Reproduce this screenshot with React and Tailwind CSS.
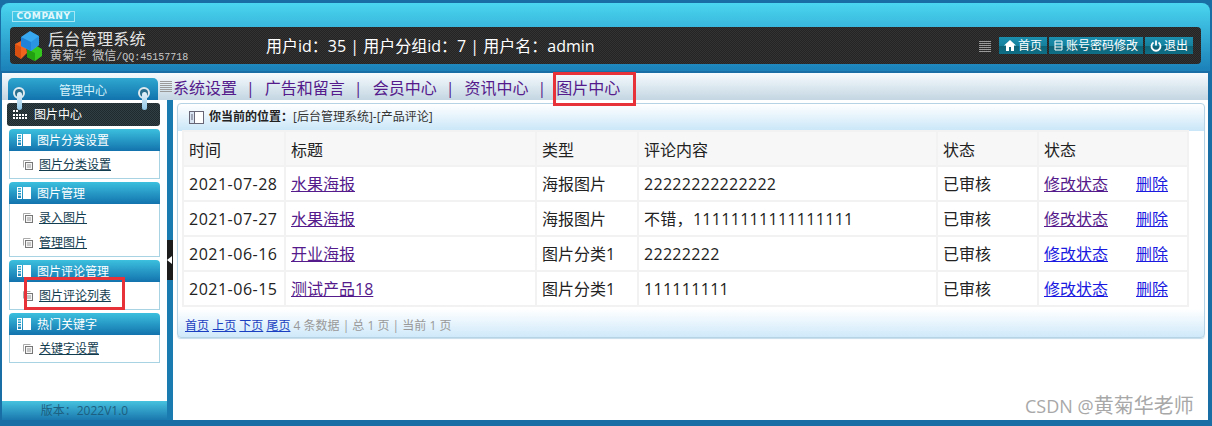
const cjk = "font-['Open_Sans','Noto_Sans_CJK_SC',sans-serif]";

const Logo = () => (
  <svg width="28" height="30" viewBox="0 0 28 30" className="shrink-0">
    <path d="M1 13l6-3 5 3 1 9-6 6-6-4z" fill="#f0641e" />
    <path d="M1 13l6 3v12l-6-4z" fill="#d94f10" />
    <path d="M13 18l8-4 7 4v7l-7 5-8-4z" fill="#35c71e" />
    <path d="M13 18l8 4v8l-8-4z" fill="#22a010" />
    <path d="M7 6l9-6 9 5v9l-8 6-10-5z" fill="#38a8f0" />
    <path d="M7 6l10 5v9l-10-5z" fill="#1f82d6" />
    <path d="M17 11l8-6v9l-8 6z" fill="#2a94e2" />
  </svg>
);

const PanelIcon = ({ stroke = "#fff" }) => (
  <svg width="14" height="12" viewBox="0 0 14 12" className="shrink-0">
    <rect x="0.5" y="0.5" width="4" height="11" fill="none" stroke={stroke} />
    <path d="M1 3h3M1 5.5h3M1 8h3" stroke={stroke} />
    <rect x="6" y="0" width="8" height="12" fill={stroke} />
  </svg>
);

const PageIcon = () => (
  <svg width="10" height="10" viewBox="0 0 10 10" className="shrink-0">
    <path d="M0.5 7.5V0.5H7.5" fill="none" stroke="#aaa" />
    <rect x="2.5" y="2.5" width="7" height="7" fill="#f4f4f4" stroke="#777" />
    <path d="M4 5h4M4 7h4" stroke="#999" />
  </svg>
);

const Bars = ({ className = "" }) => (
  <svg width="12" height="12" viewBox="0 0 12 12" className={className}>
    <path d="M0 1.5h12M0 3.5h12M0 5.5h12M0 7.5h12M0 9.5h12M0 11.5h12" stroke="#9a9a9a" />
  </svg>
);

const Ring = ({ className }) => (
  <div className={`absolute z-20 w-[12px] h-[22px] ${className}`}>
    <div className="w-[12px] h-[12px] rounded-full border-2 border-[#dfe9ee] bg-[#2b6f8f]" />
    <div className="mx-auto -mt-[7px] w-[5px] h-[18px] rounded-full bg-gradient-to-b from-[#e6f3fa] to-[#8dc6e6]" />
  </div>
);

const TopButton = ({ icon, children }) => (
  <span className="h-[17px] flex items-center gap-[2px] px-[5px] text-[12px] leading-none text-white bg-[linear-gradient(#1b8fae_0%,#15829f_50%,#0d6377_52%,#0f6f86_100%)]">
    {icon}
    {children}
  </span>
);

const groups = [
  { title: "图片分类设置", items: ["图片分类设置"] },
  { title: "图片管理", items: ["录入图片", "管理图片"] },
  { title: "图片评论管理", items: ["图片评论列表"] },
  { title: "热门关键字", items: ["关键字设置"] },
];

const rows = [
  { date: "2021-07-28", title: "水果海报", type: "海报图片", text: "22222222222222", visited: true },
  { date: "2021-07-27", title: "水果海报", type: "海报图片", text: "不错，11111111111111111", visited: true },
  { date: "2021-06-16", title: "开业海报", type: "图片分类1", text: "22222222", visited: false },
  { date: "2021-06-15", title: "测试产品18", type: "图片分类1", text: "111111111", visited: false },
];

const navItems = ["系统设置", "广告和留言", "会员中心", "资讯中心"];

const SideGroup = ({ group }) => (
  <div className="mb-[3px]">
    <div className="h-[22px] flex items-center gap-[6px] pl-[8px] rounded-t-[4px] text-[12px] leading-[18px] text-white bg-gradient-to-b from-[#3cc0de] to-[#1373ad]">
      <PanelIcon />
      <span className="pt-[2px]">{group.title}</span>
    </div>
    <div className="bg-white border border-t-0 border-[#a8d3e2] py-[1px]">
      {group.items.map((item) => (
        <div key={item} className="h-[25px] flex items-center gap-[6px] pl-[13px] text-[12px] text-[#123c4f]">
          <PageIcon />
          <a className="underline">{item}</a>
        </div>
      ))}
    </div>
  </div>
);

const App = () => {
  return (
    <div className={`relative w-[1212px] h-[426px] overflow-hidden bg-[#1a6ea6] ${cjk}`}>
      {/* header */}
      <div className="h-[73px] pt-[3px] pl-[1px] pr-[2px] bg-[#1a6ea6]">
        <div className="h-[68px] rounded-t-[8px] pt-[8px] px-[9px] bg-gradient-to-b from-[#4ad6f0] to-[#1b80b8]">
          <div className="ml-[2px] w-[63px] h-[11px] flex items-center justify-center border border-[#a5e6f4] font-['DejaVu_Sans',sans-serif] text-[9px] font-bold leading-none tracking-[0.6px] text-[#e4f8fc]">
            COMPANY
          </div>
          <div className="mt-[5px] h-[37px] flex items-center rounded-[4px] pl-[4px] pr-[8px] bg-[#2a2a2a] bg-[conic-gradient(#333_25%,#242424_0_50%,#333_0_75%,#242424_0)] bg-[length:2px_2px]">
            <Logo />
            <div className="ml-[6px] mt-[3px] w-[218px] text-[#e4e4e4]">
              <div className="text-[16px] leading-[19px] tracking-[0.3px]">后台管理系统</div>
              <div className="ml-[2px] text-[12px] leading-[14px] text-[#c8c8c8]">
                黄菊华&nbsp; 微信
                <span className="font-['Liberation_Mono',monospace] text-[10px]">/QQ:45157718</span>
              </div>
            </div>
            <div className="text-[16px] text-white">用户id：35 | 用户分组id：7 | 用户名：admin</div>
            <Bars className="ml-auto mr-[8px]" />
            <div className="flex gap-[2px]">
              <TopButton
                icon={
                  <svg width="12" height="11" viewBox="0 0 12 11">
                    <path d="M6 0L0 5.5h2V11h3V7h2v4h3V5.5h2z" fill="#fff" />
                  </svg>
                }
              >
                首页
              </TopButton>
              <TopButton
                icon={
                  <svg width="9" height="11" viewBox="0 0 9 11" className="mr-[1px]">
                    <path d="M1 1h7v9H1zM1 4h7M1 7h7" fill="none" stroke="#fff" />
                  </svg>
                }
              >
                账号密码修改
              </TopButton>
              <TopButton
                icon={
                  <svg width="12" height="12" viewBox="0 0 12 12">
                    <path d="M3.5 2.5a4.5 4.5 0 1 0 5 0M6 0.5v5" fill="none" stroke="#fff" strokeWidth="1.8" />
                  </svg>
                }
              >
                退出
              </TopButton>
            </div>
          </div>
        </div>
      </div>

      {/* nav row */}
      <div className="relative z-10 ml-[2px] mr-[4px] h-[27px] flex bg-gradient-to-b from-[#f6fbfe] to-[#c4d6e2]">
        <div className="ml-[6px] mt-[5px] w-[150px] h-[22px] rounded-t-[5px] text-center text-[12px] leading-[25px] text-[#d8f3fb] bg-gradient-to-b from-[#2fa8d0] to-[#1273ad]">
          管理中心
        </div>
        <Bars className="mt-[7px] ml-[2px] -mr-[1px]" />
        <div className="ml-[2px] pt-[2px] flex items-center text-[16px] text-[#551a8b]">
          {navItems.map((item) => (
            <span key={item} className="flex items-center">
              <a>{item}</a>
              <span className="ml-[9px] mr-[10px]">|</span>
            </span>
          ))}
          <a>图片中心</a>
        </div>
      </div>

      {/* body */}
      <div className="ml-[2px] mr-[4px] h-[320px] flex">
        <div className="relative w-[165px] flex flex-col bg-white">
          <div className="ml-[5px] mt-[3px] w-[153px] h-[23px] flex items-center gap-[6px] pl-[6px] rounded-[3px] text-[12px] text-white bg-[#222] bg-[conic-gradient(#303f44_25%,#1f2a2e_0_50%,#303f44_0_75%,#1f2a2e_0)] bg-[length:2px_2px]">
            <svg width="15" height="10" viewBox="0 0 15 10">
              <path d="M0 0h2v2H0zM3 0h2v2H3zM0 4h2v2H0zM3 4h2v2H3zM6 4h2v2H6zM9 4h2v2H9zM12 4h2v2h-2zM0 7h2v2H0zM3 7h2v2H3zM6 7h2v2H6zM9 7h2v2H9zM12 7h2v2h-2z" fill="#fff" />
            </svg>
            图片中心
          </div>
          <div className="ml-[7px] mr-[7px] mt-[3px]">
            {groups.map((g) => (
              <SideGroup key={g.title} group={g} />
            ))}
          </div>
          <div className="mt-auto h-[19px] text-center text-[12px] leading-[19px] text-[#1c5f80] bg-gradient-to-b from-[#46c2de] to-[#1a78ae]">
            版本：2022V1.0
          </div>
        </div>

        <div className="flex-1 flex bg-white">
          <div className="relative w-[6px] bg-[#1a7bb0]">
            <div className="absolute left-0 top-[140px] w-[6px] h-[40px] bg-[#1c1c1c] flex items-center">
              <div className="w-0 h-0 border-y-[4px] border-y-transparent border-r-[5px] border-r-white" />
            </div>
          </div>
          <div className="flex-1 pl-[4px] pr-[3px] pt-[3px]">
            <div className="h-[235px] rounded-[4px] border border-[#b5d3e4] shadow-[0_1px_1px_#c5dcea] bg-[linear-gradient(#fff_0,#c9e6f8_27px,#fff_27px,#fff_205px,#cfe9fa_100%)]">
              <div className="h-[26px] flex items-center gap-[5px] pl-[11px] text-[12px] text-[#333]">
                <svg width="15" height="13" viewBox="0 0 15 13">
                  <rect x="0.5" y="0.5" width="14" height="12" fill="#fff" stroke="#667" />
                  <rect x="1" y="1" width="4" height="11" fill="#d8e4f2" />
                  <path d="M5.5 1v11M2 4h2M2 6h2M2 8h2" stroke="#667" />
                </svg>
                <span>
                  <b className="text-[#222]">你当前的位置：</b>[后台管理系统]-[产品评论]
                </span>
              </div>
              <table className="ml-[4px] w-[1007px] table-fixed border-separate border-spacing-[2px] bg-[#f2f2f2] text-[16px] text-[#222]">
                <colgroup>
                  <col className="w-[100px]" />
                  <col className="w-[249px]" />
                  <col className="w-[100px]" />
                  <col className="w-[297px]" />
                  <col className="w-[99px]" />
                  <col />
                </colgroup>
                <thead>
                  <tr className="h-[33px] bg-[#f7f7f7]">
                    {["时间", "标题", "类型", "评论内容", "状态", "状态"].map((h, i) => (
                      <th key={i} className="px-[5px] pt-[2px] text-left font-normal">
                        {h}
                      </th>
                    ))}
                  </tr>
                </thead>
                <tbody>
                  {rows.map((r) => (
                    <tr key={r.date} className="h-[33px] bg-white">
                      <td className="px-[5px] tracking-[0.5px]">{r.date}</td>
                      <td className="px-[5px]">
                        <a className="underline text-[#551a8b]">{r.title}</a>
                      </td>
                      <td className="px-[5px]">{r.type}</td>
                      <td className="px-[5px] tracking-[0.3px]">{r.text}</td>
                      <td className="px-[5px]">已审核</td>
                      <td className="px-[5px]">
                        <div className="flex">
                          <a className={r.visited ? "w-[92px] underline text-[#551a8b]" : "w-[92px] underline text-[#1a1ae0]"}>修改状态</a>
                          <a className="underline text-[#1a1ae0]">删除</a>
                        </div>
                      </td>
                    </tr>
                  ))}
                </tbody>
              </table>
              <div className="mt-[10px] pl-[7px] text-[12px] text-[#999]">
                <a className="underline text-[#1a3fc0]">首页</a> <a className="underline text-[#1a3fc0]">上页</a>{" "}
                <a className="underline text-[#1a3fc0]">下页</a> <a className="underline text-[#1a3fc0]">尾页</a> 4 条数据 | 总 1 页 | 当前 1 页
              </div>
            </div>
          </div>
        </div>
      </div>

      <Ring className="left-[13px] top-[87px]" />
      <Ring className="left-[138px] top-[87px]" />

      {/* red annotation boxes */}
      <div className="absolute z-20 left-[553px] top-[72px] w-[83px] h-[34px] border-[3px] border-[#e8323a]" />
      <div className="absolute z-20 left-[24px] top-[277px] w-[101px] h-[33px] border-[3px] border-[#e8323a]" />

      <div className="absolute left-[1025px] top-[393px] text-[18px] leading-[26px] text-[#a8a8a8]">
        CSDN @<span className="text-[20px]">黄菊华老师</span>
      </div>
    </div>
  );
};

export default App;
